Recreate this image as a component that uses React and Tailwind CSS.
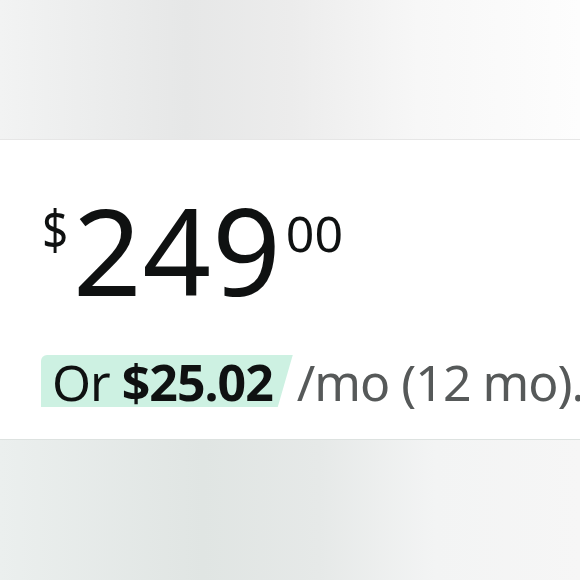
import React from 'react';

const font = { fontFamily: "'Noto Sans', 'Open Sans', sans-serif" };

const App = () => {
  return (
    <div className="w-[580px] h-[580px] flex flex-col overflow-hidden bg-white" style={font}>
      {/* top backdrop */}
      <div className="h-[140px] shrink-0 bg-[linear-gradient(90deg,#f2f3f3_0%,#e6e7e7_32%,#ececec_50%,#f7f7f7_72%,#fdfdfd_100%)] border-b border-[#e6e6e6]" />

      {/* price card */}
      <div className="h-[299px] shrink-0 bg-white pl-[42px] pt-[50px] whitespace-nowrap">
        <div className="flex items-start text-[#0f1111]">
          <span className="text-[54px] leading-none mt-[12px] scale-x-[0.85] origin-left -mr-[3px]">$</span>
          <span className="text-[120px] leading-none ml-[3px] tracking-[1px]">249</span>
          <span className="text-[50px] leading-none mt-[18px] ml-[4px]">00</span>
        </div>

        <div className="mt-[45px] flex items-start text-[50px] leading-none tracking-[-1px]">
          <span className="bg-[#cdf1e2] text-[#0f1111] rounded-tl-md pl-[11px] pr-[20px] pt-[2px] [clip-path:polygon(0_0,100%_0,calc(100%-15px)_100%,0_100%)] -ml-[1px]">
            Or <span className="font-bold">$25.02</span>
          </span>
          <span className="text-[#565959] ml-[4px] pt-[2px]">/mo (12 mo).</span>
        </div>
      </div>

      {/* bottom backdrop */}
      <div className="flex-1 bg-[linear-gradient(90deg,#ebefee_0%,#e0e5e3_35%,#e6e9e8_55%,#f3f4f4_75%,#f6f6f6_100%)] border-t border-[#dde2e0]" />
    </div>
  );
};

export default App;
